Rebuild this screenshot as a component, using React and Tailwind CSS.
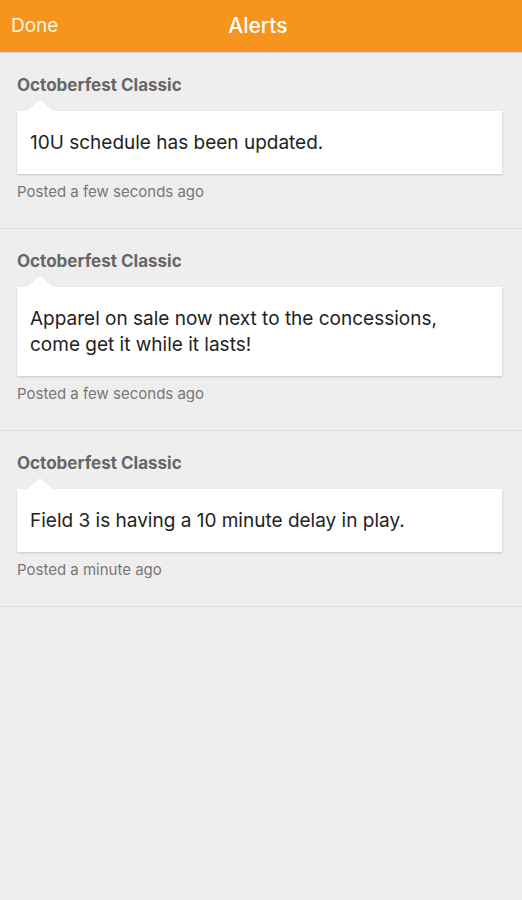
const alerts = [
  { id: 1, source: "Octoberfest Classic", message: "10U schedule has been updated.", posted: "Posted a few seconds ago" },
  {
    id: 2,
    source: "Octoberfest Classic",
    message: "Apparel on sale now next to the concessions, come get it while it lasts!",
    posted: "Posted a few seconds ago",
  },
  { id: 3, source: "Octoberfest Classic", message: "Field 3 is having a 10 minute delay in play.", posted: "Posted a minute ago" },
];

function AlertItem({ alert }) {
  return (
    <div className="border-b border-[#dddddd] pt-[22px] pr-[20px] pb-[27px] pl-[17px]">
      <p className="text-[17px] leading-[20px] font-bold text-[#666666]">{alert.source}</p>

      <div className="relative mt-4 bg-white shadow-[0_1px_2px_rgba(0,0,0,0.18)]">
        <div className="absolute -top-[11px] left-[10px] h-0 w-0 border-r-[13px] border-b-[11px] border-l-[13px] border-r-transparent border-b-white border-l-transparent" />
        <p className="px-[13px] pt-[19px] pb-[18px] text-[19px] leading-[26px] text-[#222222]">{alert.message}</p>
      </div>

      <p className="mt-[9px] text-[15px] leading-[18px] text-[#777777]">{alert.posted}</p>
    </div>
  );
}

function App() {
  return (
    <div className="min-h-[900px] bg-[#eeeeee] font-['Inter','Liberation_Sans',sans-serif]">
      <header className="relative flex h-[53px] items-center justify-center border-b border-[#d4d4d4] bg-[#f7941e]">
        <button className="absolute left-[11px] text-[19px] text-[#fff4e0]" type="button">
          Done
        </button>
        <h1 className="pr-[6px] text-[21px] font-medium text-white">Alerts</h1>
      </header>

      <div>
        {alerts.map((alert) => (
          <AlertItem alert={alert} key={alert.id} />
        ))}
      </div>
    </div>
  );
}

export default App;
